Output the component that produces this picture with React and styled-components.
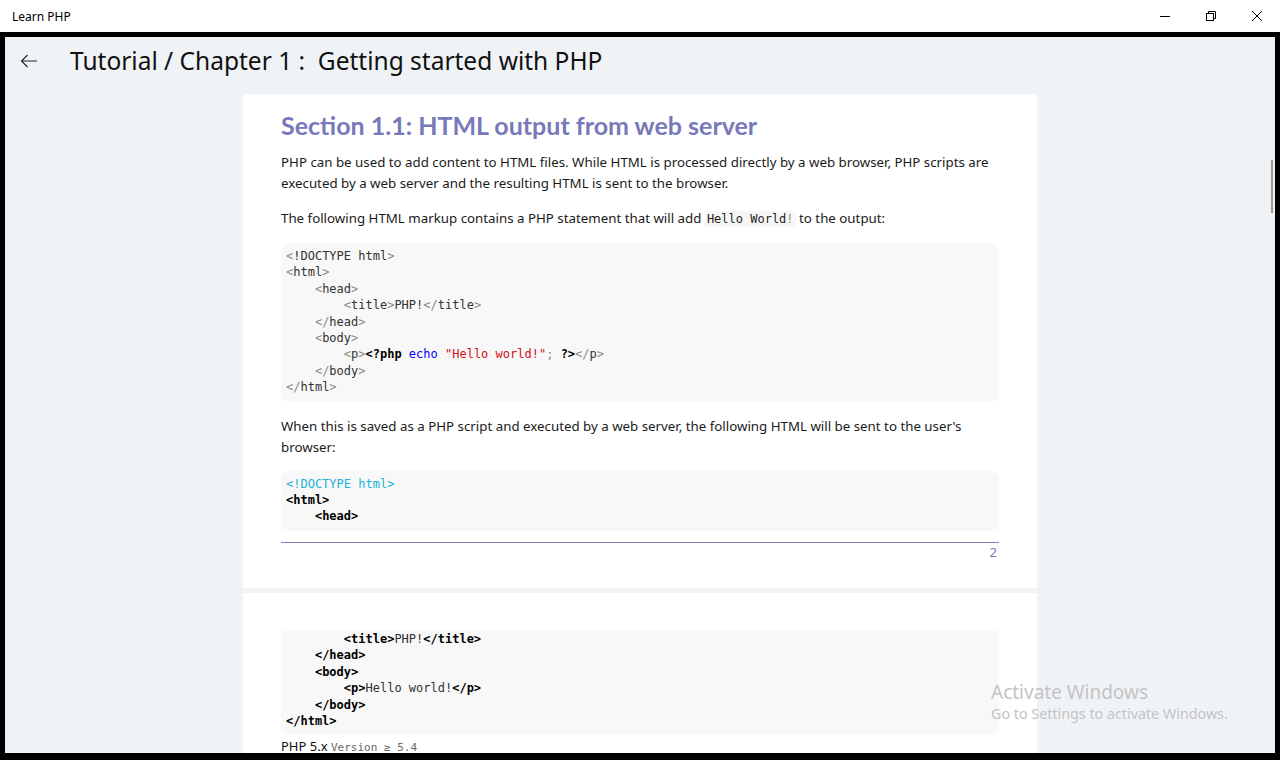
import React from 'react'
import styled, { createGlobalStyle } from 'styled-components'

const GlobalStyle = createGlobalStyle`
  html, body {
    margin: 0;
    padding: 0;
    overflow: hidden;
  }
  body {
    font-family: "Noto Sans", "Open Sans", sans-serif;
  }
`

const Window = styled.div`
  width: 1280px;
  height: 760px;
  display: flex;
  flex-direction: column;
  background: #000;
  position: relative;
`

const TitleBar = styled.div`
  height: 32px;
  flex: 0 0 32px;
  background: #fff;
  display: flex;
  align-items: center;
  justify-content: space-between;
`

const AppName = styled.span`
  padding-left: 12px;
  font-family: "Noto Sans", "Open Sans", sans-serif;
  font-size: 12px;
  color: #000;
`

const Controls = styled.div`
  display: flex;
  height: 100%;
`

const ControlButton = styled.div`
  width: 46px;
  height: 100%;
  display: flex;
  align-items: center;
  justify-content: center;
`

const Frame = styled.div`
  flex: 1;
  margin: 5px 5px 7px 5px;
  background: #eff3f6;
  display: flex;
  flex-direction: column;
  overflow: hidden;
  position: relative;
`

const Header = styled.div`
  height: 57px;
  flex: 0 0 57px;
  display: flex;
  align-items: center;
  padding: 0 0 9px 14px;
  box-sizing: border-box;
`

const BackButton = styled.div`
  width: 20px;
  height: 20px;
  display: flex;
  align-items: center;
  justify-content: center;
  margin-right: 31px;
`

const PageTitle = styled.h1`
  margin: 0;
  font-family: "Noto Sans", "Open Sans", sans-serif;
  font-weight: 400;
  font-size: 24.5px;
  line-height: 32px;
  color: #111;
  white-space: pre;
`

const Scroller = styled.div`
  flex: 1;
  display: flex;
  flex-direction: column;
  align-items: center;
  gap: 5px;
  overflow: hidden;
`

const Page = styled.div`
  width: 794px;
  flex: 0 0 auto;
  background: #fff;
  box-sizing: border-box;
  padding: ${p => p.$top}px 38px ${p => p.$bottom}px;
`

const SectionHeading = styled.h2`
  margin: 0 0 12px;
  font-family: "Lato", "Noto Sans", sans-serif;
  font-weight: 700;
  font-size: 25px;
  line-height: 30px;
  color: #7879b8;
`

const Para = styled.p`
  margin: 0 0 ${p => p.$after ?? 14}px;
  font-family: "Noto Sans", "Open Sans", sans-serif;
  font-size: 13.3px;
  line-height: 21px;
  color: #1a1a1a;
`

const InlineCode = styled.code`
  font-family: "DejaVu Sans Mono", "Liberation Mono", monospace;
  font-size: 12px;
  background: #f7f7f7;
  padding: 1px 2px;
  color: #222;
`

const CodeBlock = styled.pre`
  margin: 0 0 ${p => p.$after ?? 14}px;
  background: #f8f8f8;
  border-radius: ${p => p.$radius ?? '8px'};
  padding: ${p => p.$top ?? 5}px 5px 6px;
  font-family: "DejaVu Sans Mono", "Liberation Mono", monospace;
  font-size: 12px;
  line-height: 16.4px;
  color: #333;
  overflow: hidden;
`

const Punc = styled.span`
  color: #8a8a8a;
`

const Tag = styled.span`
  color: #333;
`

const Bold = styled.span`
  font-weight: 700;
  color: #000;
`

const Keyword = styled.span`
  color: #0000ff;
`

const Str = styled.span`
  color: #d10f14;
`

const Doctype = styled.span`
  color: #1bb3d9;
`

const Rule = styled.hr`
  margin: 11px 0 0;
  border: 0;
  border-top: 1px solid #7b80b5;
`

const PageNumber = styled.div`
  text-align: right;
  padding-right: 2px;
  font-family: "Noto Sans", "Open Sans", sans-serif;
  font-size: 13px;
  line-height: 18px;
  color: #7879b8;
`

const VersionLine = styled.div`
  font-family: "Noto Sans", "Open Sans", sans-serif;
  font-size: 13px;
  line-height: 16px;
  color: #111;
  margin-top: 3px;
`

const VersionTag = styled.span`
  font-family: "DejaVu Sans Mono", "Liberation Mono", monospace;
  font-size: 11px;
  color: #666;
`

const ScrollThumb = styled.div`
  position: absolute;
  right: 2px;
  top: 123px;
  width: 2px;
  height: 53px;
  background: #9a9a9a;
`

const Watermark = styled.div`
  position: absolute;
  left: 991px;
  top: 680px;
  font-family: "Noto Sans", "Open Sans", sans-serif;
  color: #c4c4c4;
  pointer-events: none;
`

const WatermarkTitle = styled.div`
  font-size: 19px;
  line-height: 24px;
`

const WatermarkSub = styled.div`
  font-size: 14.3px;
  line-height: 20px;
`

const L = ({ children }) => <Punc>{children}</Punc>

const App = () => {
  return (
    <Window>
      <GlobalStyle />
      <TitleBar>
        <AppName>Learn PHP</AppName>
        <Controls>
          <ControlButton>
            <svg width="10" height="10" viewBox="0 0 10 10">
              <path d="M0 5.5h10" stroke="#000" strokeWidth="1" />
            </svg>
          </ControlButton>
          <ControlButton>
            <svg width="10" height="10" viewBox="0 0 10 10" fill="none">
              <rect x="0.5" y="2.5" width="7" height="7" stroke="#000" />
              <path d="M2.5 2.5V0.5h7v7h-2" stroke="#000" />
            </svg>
          </ControlButton>
          <ControlButton>
            <svg width="10" height="10" viewBox="0 0 10 10">
              <path d="M0 0L10 10M10 0L0 10" stroke="#000" strokeWidth="1" />
            </svg>
          </ControlButton>
        </Controls>
      </TitleBar>

      <Frame>
        <Header>
          <BackButton>
            <svg width="18" height="14" viewBox="0 0 18 14" fill="none">
              <path d="M17 7H1.5M7.5 1L1.5 7l6 6" stroke="#222" strokeWidth="1.1" />
            </svg>
          </BackButton>
          <PageTitle>Tutorial / Chapter 1 :  Getting started with PHP</PageTitle>
        </Header>

        <Scroller>
          <Page $top={16} $bottom={27}>
            <SectionHeading>Section 1.1: HTML output from web server</SectionHeading>
            <Para>
              PHP can be used to add content to HTML files. While HTML is processed directly by a web browser, PHP scripts are executed by a web server and the resulting HTML is sent to the browser.
            </Para>
            <Para $after={13}>
              The following HTML markup contains a PHP statement that will add <InlineCode>Hello World<L>!</L></InlineCode> to the output:
            </Para>
            <CodeBlock>
              <L>&lt;</L><Tag>!DOCTYPE html</Tag><L>&gt;</L>{'\n'}
              <L>&lt;</L><Tag>html</Tag><L>&gt;</L>{'\n'}
              {'    '}<L>&lt;</L><Tag>head</Tag><L>&gt;</L>{'\n'}
              {'        '}<L>&lt;</L><Tag>title</Tag><L>&gt;</L><Tag>PHP!</Tag><L>&lt;/</L><Tag>title</Tag><L>&gt;</L>{'\n'}
              {'    '}<L>&lt;/</L><Tag>head</Tag><L>&gt;</L>{'\n'}
              {'    '}<L>&lt;</L><Tag>body</Tag><L>&gt;</L>{'\n'}
              {'        '}<L>&lt;</L><Tag>p</Tag><L>&gt;</L><Bold>&lt;?php</Bold> <Keyword>echo</Keyword> <Str>"Hello world!"</Str><L>;</L> <Bold>?&gt;</Bold><L>&lt;/</L><Tag>p</Tag><L>&gt;</L>{'\n'}
              {'    '}<L>&lt;/</L><Tag>body</Tag><L>&gt;</L>{'\n'}
              <L>&lt;/</L><Tag>html</Tag><L>&gt;</L>
            </CodeBlock>
            <Para $after={13}>
              When this is saved as a PHP script and executed by a web server, the following HTML will be sent to the user's browser:
            </Para>
            <CodeBlock $after={0} $radius="8px 8px 0 0">
              <Doctype>&lt;!DOCTYPE html&gt;</Doctype>{'\n'}
              <Bold>&lt;html&gt;</Bold>{'\n'}
              {'    '}<Bold>&lt;head&gt;</Bold>
            </CodeBlock>
            <Rule />
            <PageNumber>2</PageNumber>
          </Page>

          <Page $top={38} $bottom={20}>
            <CodeBlock $after={0} $top={0} $radius="0 0 8px 8px">
              {'        '}<Bold>&lt;title&gt;</Bold>PHP!<Bold>&lt;/title&gt;</Bold>{'\n'}
              {'    '}<Bold>&lt;/head&gt;</Bold>{'\n'}
              {'    '}<Bold>&lt;body&gt;</Bold>{'\n'}
              {'        '}<Bold>&lt;p&gt;</Bold>Hello world!<Bold>&lt;/p&gt;</Bold>{'\n'}
              {'    '}<Bold>&lt;/body&gt;</Bold>{'\n'}
              <Bold>&lt;/html&gt;</Bold>
            </CodeBlock>
            <VersionLine>
              PHP 5.x <VersionTag>Version ≥ 5.4</VersionTag>
            </VersionLine>
          </Page>
        </Scroller>

        <ScrollThumb />
      </Frame>

      <Watermark>
        <WatermarkTitle>Activate Windows</WatermarkTitle>
        <WatermarkSub>Go to Settings to activate Windows.</WatermarkSub>
      </Watermark>
    </Window>
  )
}

export default App
